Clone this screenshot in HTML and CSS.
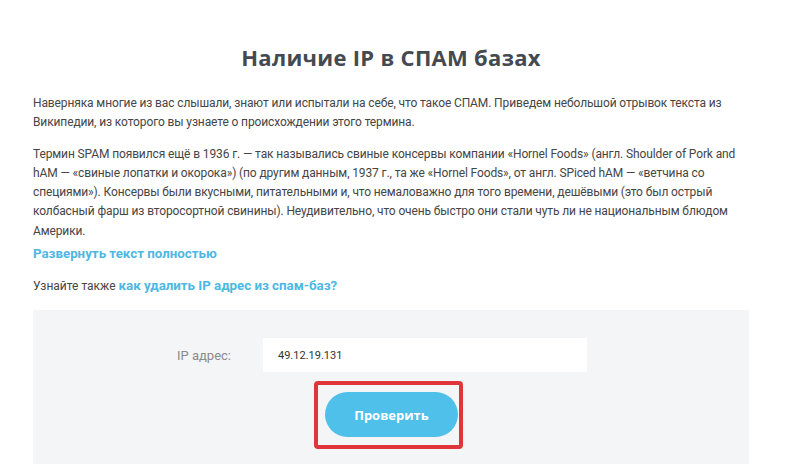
FILE: index.html
```html
<!DOCTYPE html>
<html lang="ru">
<head>
<meta charset="utf-8">
<link rel="stylesheet" href="styles.css">
</head>
<body>
<div class="page">
  <h1 class="title">Наличие IP в СПАМ базах</h1>
  <p class="text">Наверняка многие из вас слышали, знают или испытали на себе, что такое СПАМ. Приведем небольшой отрывок текста из<br>Википедии, из которого вы узнаете о происхождении этого термина.</p>
  <p class="text text-last">Термин SPAM появился ещё в 1936 г. — так назывались свиные консервы компании «Hornel Foods» (англ. Shoulder of Pork and<br>hAM — «свиные лопатки и окорока») (по другим данным, 1937 г., та же «Hornel Foods», от англ. SPiced hAM — «ветчина со<br>специями»). Консервы были вкусными, питательными и, что немаловажно для того времени, дешёвыми (это был острый<br>колбасный фарш из второсортной свинины). Неудивительно, что очень быстро они стали чуть ли не национальным блюдом<br>Америки.</p>
  <p class="expand"><a class="link" href="#">Развернуть текст полностью</a></p>
  <p class="also">Узнайте также <a class="link" href="#">как удалить IP адрес из спам-баз?</a></p>
  <div class="form">
    <div class="row">
      <label class="label">IP адрес:</label>
      <div class="input">49.12.19.131</div>
    </div>
    <div class="actions">
      <div class="highlight">
        <button class="btn">Проверить</button>
      </div>
    </div>
  </div>
</div>
</body>
</html>
```
FILE: styles.css
```css
html, body {
  margin: 0;
  padding: 0;
  background: #fff;
}
body {
  font-family: Roboto, "Liberation Sans", sans-serif;
  color: #454545;
}
.page {
  width: 716px;
  margin-left: 33px;
  padding-top: 41px;
}
.title {
  margin: 0 0 21px 0;
  text-align: center;
  font-family: "Open Sans", sans-serif;
  font-weight: 700;
  font-size: 22px;
  line-height: 32px;
  color: #444a4f;
  letter-spacing: 0.3px;
}
.text {
  margin: 0 0 12px 0;
  font-size: 12px;
  letter-spacing: -0.12px;
  line-height: 19.3px;
  white-space: nowrap;
}
.text-last {
  margin-bottom: 3px;
}
.expand {
  margin: 3px 0 12px 0;
  font-size: 12px;
  line-height: 20px;
}
.also {
  margin: 0 0 14px 0;
  font-size: 12px;
  line-height: 20px;
}
.link {
  color: #4db8e3;
  font-weight: 700;
  font-size: 13.3px;
  text-decoration: none;
}
.form {
  background: #f4f5f7;
  height: 154px;
  box-sizing: border-box;
  padding-top: 28px;
}
.row {
  display: flex;
  align-items: center;
}
.label {
  width: 198px;
  text-align: right;
  font-size: 13px;
  color: #8a8a8a;
}
.input {
  margin-left: 32px;
  width: 324px;
  height: 34px;
  box-sizing: border-box;
  background: #fff;
  padding-left: 15px;
  display: flex;
  align-items: center;
  font-size: 11px;
  color: #333;
}
.actions {
  display: flex;
  padding-left: 281px;
  padding-top: 9px;
}
.highlight {
  border: 4px solid #e0353b;
  border-radius: 4px;
  padding: 7px 1px 8px 7px;
}
.btn {
  width: 133px;
  height: 45px;
  border: none;
  border-radius: 23px;
  background: #4ec0ea;
  color: #fff;
  font-family: "Open Sans", sans-serif;
  font-weight: 700;
  font-size: 13px;
  padding: 0;
}
```
